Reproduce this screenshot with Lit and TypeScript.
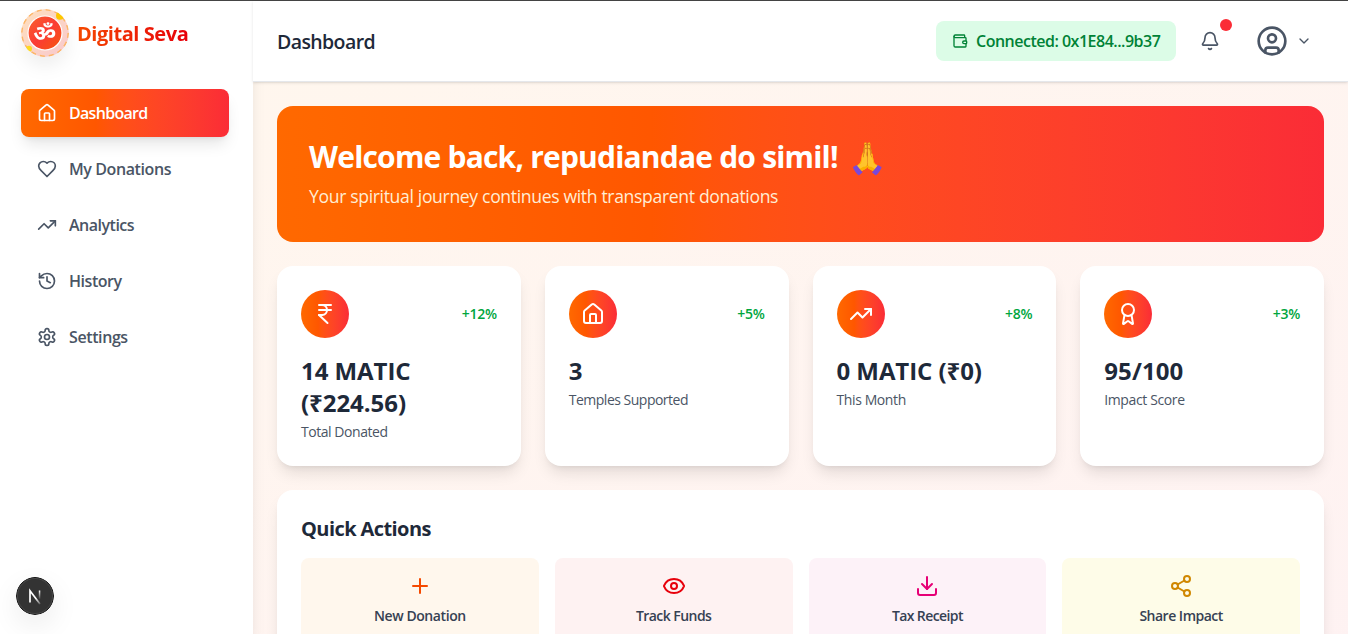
import { LitElement, html, css, svg } from "lit";
import { customElement } from "lit/decorators.js";

const icons: Record<string, any> = {
  house: svg`<path d="M15 21v-8a1 1 0 0 0-1-1h-4a1 1 0 0 0-1 1v8"/><path d="M3 10a2 2 0 0 1 .709-1.528l7-5.999a2 2 0 0 1 2.582 0l7 5.999A2 2 0 0 1 21 10v9a2 2 0 0 1-2 2H5a2 2 0 0 1-2-2z"/>`,
  heart: svg`<path d="M19 14c1.49-1.46 3-3.21 3-5.5A5.5 5.5 0 0 0 16.5 3c-1.76 0-3 .5-4.5 2-1.5-1.5-2.74-2-4.5-2A5.5 5.5 0 0 0 2 8.5c0 2.3 1.5 4.05 3 5.5l7 7Z"/>`,
  trend: svg`<path d="M16 7h6v6"/><path d="m22 7-8.500 8.500-5-5L2 17"/>`,
  history: svg`<path d="M3 12a9 9 0 1 0 9-9 9.750 9.750 0 0 0-6.740 2.740L3 8"/><path d="M3 3v5h5"/><path d="M12 7v5l4 2"/>`,
  settings: svg`<path d="M12.220 2h-.44a2 2 0 0 0-2 2v.18a2 2 0 0 1-1 1.730l-.43.25a2 2 0 0 1-2 0l-.15-.08a2 2 0 0 0-2.730.73l-.22.38a2 2 0 0 0 .73 2.730l.15.1a2 2 0 0 1 1 1.720v.51a2 2 0 0 1-1 1.740l-.15.09a2 2 0 0 0-.73 2.730l.22.38a2 2 0 0 0 2.730.73l.15-.08a2 2 0 0 1 2 0l.43.25a2 2 0 0 1 1 1.730V20a2 2 0 0 0 2 2h.44a2 2 0 0 0 2-2v-.18a2 2 0 0 1 1-1.730l.43-.25a2 2 0 0 1 2 0l.15.08a2 2 0 0 0 2.730-.73l.22-.39a2 2 0 0 0-.73-2.730l-.15-.08a2 2 0 0 1-1-1.740v-.5a2 2 0 0 1 1-1.740l.15-.09a2 2 0 0 0 .73-2.730l-.22-.38a2 2 0 0 0-2.730-.73l-.15.08a2 2 0 0 1-2 0l-.43-.25a2 2 0 0 1-1-1.730V4a2 2 0 0 0-2-2z"/><circle cx="12" cy="12" r="3"/>`,
  wallet: svg`<path d="M19 7V4a1 1 0 0 0-1-1H5a2 2 0 0 0 0 4h15a1 1 0 0 1 1 1v4h-3a2 2 0 0 0 0 4h3a1 1 0 0 0 1-1v-2a1 1 0 0 0-1-1"/><path d="M3 5v14a2 2 0 0 0 2 2h15a1 1 0 0 0 1-1v-4"/>`,
  bell: svg`<path d="M10.268 21a2 2 0 0 0 3.464 0"/><path d="M3.262 15.326A1 1 0 0 0 4 17h16a1 1 0 0 0 .74-1.673C19.410 13.956 18 12.499 18 8A6 6 0 0 0 6 8c0 4.499-1.411 5.956-2.738 7.326"/>`,
  user: svg`<circle cx="12" cy="12" r="10"/><circle cx="12" cy="10" r="3"/><path d="M7 20.662V19a2 2 0 0 1 2-2h6a2 2 0 0 1 2 2v1.662"/>`,
  chevron: svg`<path d="m6 9 6 6 6-6"/>`,
  rupee: svg`<path d="M6 3h12"/><path d="M6 8h12"/><path d="m6 13 8.500 8"/><path d="M6 13h3"/><path d="M9 13c6.667 0 6.667-10 0-10"/>`,
  award: svg`<path d="m15.477 12.890 1.515 8.526a.5.5 0 0 1-.81.47l-3.580-2.687a1 1 0 0 0-1.197 0l-3.586 2.686a.5.5 0 0 1-.81-.469l1.514-8.526"/><circle cx="12" cy="8" r="6"/>`,
  plus: svg`<path d="M5 12h14"/><path d="M12 5v14"/>`,
  eye: svg`<path d="M2.062 12.348a1 1 0 0 1 0-.696 10.750 10.750 0 0 1 19.876 0 1 1 0 0 1 0 .696 10.750 10.750 0 0 1-19.876 0"/><circle cx="12" cy="12" r="3"/>`,
  download: svg`<path d="M12 15V3"/><path d="M21 15v4a2 2 0 0 1-2 2H5a2 2 0 0 1-2-2v-4"/><path d="m7 10 5 5 5-5"/>`,
  share: svg`<circle cx="18" cy="5" r="3"/><circle cx="6" cy="12" r="3"/><circle cx="18" cy="19" r="3"/><path d="m8.590 13.510 6.830 3.980"/><path d="m15.410 6.510-6.820 3.980"/>`,
};

const icon = (name: string, size: number) => html`<svg class="icon" width=${size} height=${size} viewBox="0 0 24 24">${icons[name]}</svg>`;

// Each label carries its own tracking in pixels.
const label = (text: string, tracking: number) => html`<span style="letter-spacing:${tracking}px">${text}</span>`;

const nav: [string, string, number][] = [
  ["house", "Dashboard", -0.7],
  ["heart", "My Donations", -0.4],
  ["trend", "Analytics", -0.5],
  ["history", "History", -0.45],
  ["settings", "Settings", -0.4],
];
const stats: [string, string, string, number, string, number][] = [
  ["rupee", "+12%", "14 MATIC (₹224.56)", -0.05, "Total Donated", -0.45],
  ["house", "+5%", "3", 0, "Temples Supported", -0.5],
  ["trend", "+8%", "0 MATIC (₹0)", -0.07, "This Month", -0.4],
  ["award", "+3%", "95/100", 0.1, "Impact Score", -0.38],
];
const actions: [string, string, string, number][] = [
  ["plus", "New Donation", "orange", -0.42],
  ["eye", "Track Funds", "red", -0.55],
  ["download", "Tax Receipt", "pink", -0.6],
  ["share", "Share Impact", "yellow", -0.5],
];

@customElement("app-root")
export class AppRoot extends LitElement {
  static styles = css`
    :host { display: block; height: 634px; overflow: hidden; font-family: "Open Sans", "Noto Sans", sans-serif; color: #1e2939; line-height: 24px;
      --flame: linear-gradient(to right in oklab, oklch(70.5% 0.213 47.604), oklch(63.7% 0.237 25.331));
      --lift: 0 10px 15px -3px #0000001a, 0 4px 6px -4px #0000001a; }
    * { box-sizing: border-box; margin: 0; }
    .icon { display: block; flex: none; fill: none; stroke: currentColor; stroke-width: 2; stroke-linecap: round; stroke-linejoin: round; }
    .page { position: relative; display: flex; height: 634px; border-top: 1px solid #454545; background: linear-gradient(to bottom right in oklab, oklch(98% 0.016 73.684), oklch(97.1% 0.013 17.38)); }
    .side { width: 253px; flex: none; background: #fff; padding: 8px 24px 0 21px; box-shadow: var(--lift); }
    .brand { display: flex; align-items: center; gap: 8px; height: 48px; }
    .logo { width: 48px; height: 48px; border-radius: 50%; filter: drop-shadow(0 10px 8px #0000000f); }
    .name { padding-top: 2px; font-size: 20px; font-weight: 700; letter-spacing: -0.45px; background: linear-gradient(to right, #f54900, #e7000b); -webkit-background-clip: text; background-clip: text; color: transparent; white-space: nowrap; }
    .nav { display: flex; flex-direction: column; gap: 8px; margin-top: 32px; }
    .item { display: flex; align-items: center; gap: 12px; height: 48px; padding: 0 16px; width: 208px; border-radius: 8px; color: #4a5565; font-size: 16px; font-weight: 600; }
    .item.on { color: #fff; background: var(--flame); box-shadow: var(--lift); }
    .main { flex: 1; min-width: 0; }
    .top { height: 81px; background: #fff; display: flex; align-items: center; padding: 0 36px 0 24px; box-shadow: 0 1px 3px #0000001a, 0 1px 2px -1px #0000001a; border-bottom: 1px solid #e5e7eb; }
    .title { padding-top: 2px; font-size: 19.5px; font-weight: 600; letter-spacing: -0.6px; flex: 1; }
    .wallet { display: flex; align-items: center; gap: 8px; width: 240px; height: 40px; border-radius: 8px; padding: 0 16px; background: #dcfce7; color: #008236; font-weight: 600; font-size: 16px; letter-spacing: -0.5px; white-space: nowrap; }
    .bell { position: relative; margin-left: 24px; color: #4a5565; }
    .dot { position: absolute; left: 20px; top: -12px; width: 12px; height: 12px; border-radius: 50%; background: #fb2c36; }
    .user { display: flex; align-items: center; gap: 8px; margin-left: 36px; color: #4a5565; }
    .body { padding: 24px; display: flex; flex-direction: column; gap: 24px; }
    .hero { height: 136px; border-radius: 16px; padding: 32px; color: #fff; background: var(--flame); }
    .hello { display: flex; align-items: center; gap: 10px; height: 36px; padding-top: 2px; font-size: 30px; font-weight: 700; white-space: nowrap; letter-spacing: -0.8px; }
    .pray { font-size: 31px; font-weight: 400; filter: url(#sleeves); }
    .defs { position: absolute; width: 0; height: 0; }
    .sub { margin-top: 8px; height: 28px; line-height: 28px; font-size: 17.6px; color: #ffedd4; letter-spacing: -0.35px; }
    .stats { display: grid; grid-template-columns: repeat(4, 1fr); gap: 24px; }
    .card { height: 200px; background: #fff; border-radius: 16px; padding: 24px; box-shadow: var(--lift); }
    .row { display: flex; align-items: center; justify-content: space-between; margin-bottom: 16px; }
    .badge { width: 48px; height: 48px; border-radius: 50%; display: grid; place-items: center; color: #fff; background: var(--flame); }
    .pct { font-size: 14px; font-weight: 550; color: #00a63e; letter-spacing: -0.3px; }
    .num { padding-top: 1px; font-size: 24px; line-height: 32px; font-weight: 700; }
    .lab { font-size: 14px; line-height: 20px; margin-top: 3px; color: #4a5565; }
    .quick { background: #fff; border-radius: 16px; padding: 24px; height: 230px; box-shadow: var(--lift); }
    .qt { padding-top: 1px; font-size: 20px; line-height: 28px; font-weight: 700; letter-spacing: -0.58px; }
    .acts { display: grid; grid-template-columns: repeat(4, 1fr); gap: 16px; margin-top: 15px; }
    .act { height: 84px; border-radius: 8px; padding-top: 16px; display: flex; flex-direction: column; align-items: center; gap: 8px; }
    .al { font-size: 14px; line-height: 20px; font-weight: 600; color: #364153; }
    .orange { background: #fff7ed; color: #f54900; }
    .red { background: #fef2f2; color: #e7000b; }
    .pink { background: #fdf2f8; color: #e60076; }
    .yellow { background: #fefce8; color: #d08700; }
    .dev { position: absolute; left: 16px; top: 576px; border-radius: 50%; box-shadow: 0 10px 28px #00000014; }
  `;

  render() {
    return html`<div class="page">
      <svg class="defs"><filter id="sleeves" color-interpolation-filters="sRGB"><feColorMatrix values="1 0 .42 0 0  0 1 -.35 0 .03  0 0 1.100 0 0  0 0 0 1 0"/></filter></svg>
      <aside class="side">
        <div class="brand">
          <svg class="logo" viewBox="0 0 48 48">
            <defs><linearGradient id="ring" x1="0" y1="0" x2="1" y2="1"><stop offset="0" stop-color="#ffe0bd"/><stop offset="1" stop-color="#f8c8ce"/></linearGradient>
            <linearGradient id="core" x1="0" y1="0" x2="1" y2="1"><stop offset="0" stop-color="#f9622a"/><stop offset=".5" stop-color="#fb3b35"/><stop offset="1" stop-color="#f55a0c"/></linearGradient></defs>
            <circle cx="24" cy="24" r="24" fill="url(#ring)"/>
            <circle cx="24" cy="24" r="23.200" fill="none" stroke="#fdb668" stroke-width="1.600" stroke-dasharray="5 4.110"/>
            <circle cx="24" cy="24" r="17" fill="url(#core)" stroke="#fff" stroke-width="1.200"/>
            <text x="23.800" y="32" text-anchor="middle" font-size="22.500" font-weight="700" fill="#fff">ॐ</text>
            <circle cx="39" cy="6.800" r="4" fill="#fdc700"/><circle cx="8" cy="39.800" r="3" fill="#fddb20"/>
          </svg>
          <span class="name">Digital Seva</span>
        </div>
        <nav class="nav">${nav.map(([i, t, s], n) => html`<a class="item ${n ? "" : "on"}">${icon(i, 20)}${label(t, s)}</a>`)}</nav>
      </aside>
      <main class="main">
        <header class="top">
          <h1 class="title">Dashboard</h1>
          <div class="wallet">${icon("wallet", 16)}<span>Connected: 0x1E84...9b37</span></div>
          <div class="bell">${icon("bell", 20)}<i class="dot"></i></div>
          <div class="user">${icon("user", 32)}${icon("chevron", 16)}</div>
        </header>
        <div class="body">
          <section class="hero"><h2 class="hello"><span>Welcome back, repudiandae do simil!</span><span class="pray">🙏</span></h2><p class="sub">Your spiritual journey continues with transparent donations</p></section>
          <section class="stats">${stats.map(([i, p, v, vs, l, ls]) => html`<div class="card"><div class="row"><div class="badge">${icon(i, 24)}</div><span class="pct">${p}</span></div><div class="num">${label(v, vs)}</div><div class="lab">${label(l, ls)}</div></div>`)}</section>
          <section class="quick"><h3 class="qt">Quick Actions</h3><div class="acts">${actions.map(([i, t, c, s]) => html`<div class="act ${c}">${icon(i, 24)}<span class="al">${label(t, s)}</span></div>`)}</div></section>
        </div>
      </main>
      <svg class="dev" width="38" height="38" viewBox="0 0 38 38">
        <defs><linearGradient id="stem" x1="0" y1="0" x2="0" y2="1"><stop offset="0" stop-color="#fff"/><stop offset="1" stop-color="#fff" stop-opacity="0"/></linearGradient>
        <linearGradient id="slash" gradientUnits="userSpaceOnUse" x1="20" y1="21" x2="24.500" y2="27"><stop offset="0" stop-color="#fff"/><stop offset="1" stop-color="#fff" stop-opacity=".2"/></linearGradient></defs>
        <circle cx="19" cy="19" r="18.500" fill="#333" stroke="#111"/><circle cx="19" cy="19" r="17.500" fill="none" stroke="#484848"/>
        <path d="M14 25.500V13.800L24 27" fill="none" stroke="url(#slash)" stroke-width="1.700"/><rect x="22.800" y="13.500" width="1.500" height="9" fill="url(#stem)"/></svg>
    </div>`;
  }
}
